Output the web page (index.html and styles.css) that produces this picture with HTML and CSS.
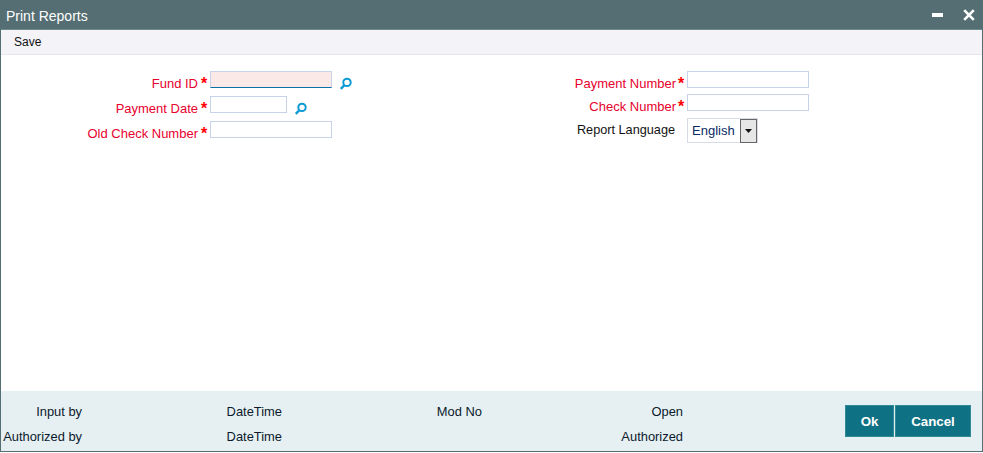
FILE: index.html
```html
<!DOCTYPE html>
<html lang="en">
<head>
<meta charset="utf-8">
<title>Print Reports</title>
<link rel="stylesheet" href="styles.css">
</head>
<body>
<div class="window">
  <header class="titlebar">
    <h1 class="title">Print Reports</h1>
    <div class="window-controls">
      <svg class="ctl" width="12" height="12" viewBox="0 0 12 12"><rect x="0" y="4" width="11" height="4" fill="#fff"/></svg>
      <svg class="ctl" width="12" height="12" viewBox="0 0 12 12"><path d="M1.2 1.2L10.8 10.8M10.8 1.2L1.2 10.8" stroke="#fff" stroke-width="2.6"/></svg>
    </div>
  </header>
  <nav class="toolbar"><span class="save">Save</span></nav>
  <main class="form">
    <div class="col col-left">
      <div class="row">
        <label class="lbl req">Fund ID</label><span class="star">*</span>
        <input class="inp wide lov" type="text">
        <svg class="search" width="14" height="14" viewBox="0 0 14 14"><circle cx="8" cy="5.4" r="3.7" fill="none" stroke="#0b9ad3" stroke-width="2"/><path d="M5.3 8.2L1.8 11.9" stroke="#0b9ad3" stroke-width="2.4"/></svg>
      </div>
      <div class="row">
        <label class="lbl req">Payment Date</label><span class="star">*</span>
        <input class="inp narrow" type="text">
        <svg class="search" width="14" height="14" viewBox="0 0 14 14"><circle cx="8" cy="5.4" r="3.7" fill="none" stroke="#0b9ad3" stroke-width="2"/><path d="M5.3 8.2L1.8 11.9" stroke="#0b9ad3" stroke-width="2.4"/></svg>
      </div>
      <div class="row">
        <label class="lbl req">Old Check Number</label><span class="star">*</span>
        <input class="inp wide" type="text">
      </div>
    </div>
    <div class="col col-right">
      <div class="row">
        <label class="lbl req">Payment Number</label><span class="star">*</span>
        <input class="inp wide" type="text">
      </div>
      <div class="row">
        <label class="lbl req">Check Number</label><span class="star">*</span>
        <input class="inp wide" type="text">
      </div>
      <div class="row row-select">
        <label class="lbl">Report Language</label><span class="star"></span>
        <div class="select"><span class="select-value">English</span><span class="select-btn"><svg width="7" height="4" viewBox="0 0 7 4"><path d="M0 0H7L3.5 4Z" fill="#111"/></svg></span></div>
      </div>
    </div>
  </main>
  <footer class="footer">
    <div class="audit">
      <span class="a1">Input by</span><span class="a2">DateTime</span><span class="a3">Mod No</span><span class="a4">Open</span>
      <span class="a1">Authorized by</span><span class="a2">DateTime</span><span class="a3"></span><span class="a4">Authorized</span>
    </div>
    <div class="actions">
      <button class="btn btn-ok" type="button">Ok</button>
      <button class="btn btn-cancel" type="button">Cancel</button>
    </div>
  </footer>
</div>
</body>
</html>
```
FILE: styles.css
```css
* { box-sizing: border-box; }
html, body { margin: 0; padding: 0; background: #fff; }
body { font-family: "Liberation Sans", Arial, sans-serif; font-size: 12px; color: #0b1a2b; }
.window {
  width: 983px; height: 452px;
  border: 1px solid #546e73;
  display: flex; flex-direction: column;
  background: #fff;
}
.titlebar {
  height: 29px; flex: none;
  background: #546e73;
  display: flex; align-items: center; justify-content: space-between;
  padding: 0 7px 0 5px;
  border-bottom: 1px solid #6d8a8c;
}
.title { margin: 0; padding-top: 2px; font-size: 14px; font-weight: normal; color: #fff; }
.window-controls { display: flex; gap: 19px; align-items: center; }
.ctl { display: block; }
.toolbar {
  height: 25px; flex: none;
  background: #f3f3f8;
  border-bottom: 1px solid #e6e6ea;
  display: flex; align-items: center;
  padding-left: 13px;
}
.save { font-size: 12px; color: #111; }
.form { flex: 1; display: flex; padding-top: 16px; }
.col { display: flex; flex-direction: column; }
.col-left { width: 476px; gap: 8px; }
.col-right { gap: 6px; }
.row { display: flex; align-items: center; height: 17px; }
.col-right .row:nth-child(2) { margin-bottom: 1px; }
.lbl { text-align: right; font-size: 13px; padding-top: 8px; color: #111; white-space: nowrap; }
.col-left .lbl { width: 197px; }
.col-right .lbl { width: 199px; }
.req { color: #e8002d; }
.star { width: 12px; padding-left: 3px; padding-top: 8px; color: #f00; font-size: 16px; font-weight: bold; line-height: 14px; }
.col-right .star { width: 11px; padding-left: 2px; }
.inp { height: 17px; border: 1px solid #c6d3ea; background: #fff; padding: 0; margin: 0; outline: none; display: block; }
.wide { width: 122px; }
.narrow { width: 77px; }
.lov { background: #fbe9e7; border-bottom: 1px solid #0b6fa8; }
.search { margin-left: 7px; margin-top: 8px; }
.row-select { height: 25px; }
.row-select .lbl { padding: 0 1px 2px 0; font-size: 12.7px; }
.select {
  width: 71px; height: 25px; border: 1px solid #d6dbe6;
  display: flex; align-items: center; justify-content: space-between;
  font-size: 13px; color: #0a2a66; padding-left: 4px;
}
.select-btn {
  width: 17px; height: 24px;
  background: #e6e6e6; border: 1px solid #666;
  display: flex; align-items: center; justify-content: center;
}
.footer {
  height: 60px; flex: none;
  background: #e6f0f3;
  display: flex; justify-content: space-between; align-items: flex-start;
  padding-right: 11px;
}
.audit {
  display: grid;
  grid-template-columns: 81px 200px 200px 201px;
  grid-template-rows: 25px 25px;
  padding-top: 8px;
  align-items: center; justify-items: end;
}
.audit span { font-size: 12.9px; color: #0b1a2b; }
.actions { display: flex; padding-top: 14px; gap: 1px; }
.btn {
  height: 32px; border: 1px solid #2f8a96; background: #0f7284; color: #fff;
  font: bold 13.3px "Liberation Sans", Arial, sans-serif; padding: 0;
}
.btn-ok { width: 49px; }
.btn-cancel { width: 76px; }
```
